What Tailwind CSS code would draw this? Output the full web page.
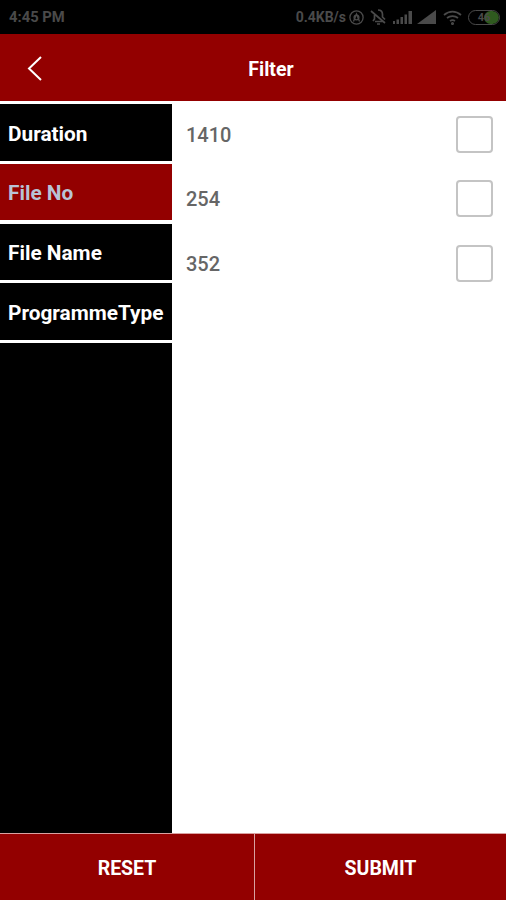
<!DOCTYPE html>
<html lang="en">
<head>
    <meta charset="UTF-8">
    <meta name="viewport" content="width=device-width, initial-scale=1.0">
    <title>Filter</title>
    <script src="https://cdn.jsdelivr.net/npm/@tailwindcss/browser@4"></script>
</head>
<body class="w-[506px] h-[900px] overflow-hidden bg-white font-['Roboto',sans-serif] flex flex-col">

    <!-- status bar -->
    <div class="h-[34px] bg-black flex items-center justify-between pl-[9px] pr-[6px] text-[#4a4a4a] font-bold">
        <span class="text-[14.8px]">4:45 PM</span>
        <div class="flex items-center">
            <span class="text-[14px]">0.4KB/s</span>
            <svg class="ml-[3px]" width="15" height="15" viewBox="0 0 15 15" fill="none" stroke="#4a4a4a" stroke-width="1.3"><circle cx="7.500" cy="7.500" r="6.600"/><path d="M4.500 11.500 7.500 4l3 7.500"/><circle cx="7.500" cy="7.500" r="2.400"/></svg>
            <svg class="ml-[6px]" width="17" height="18" viewBox="0 0 17 18" fill="none" stroke="#4a4a4a" stroke-width="1.700"><path d="M8 2c3 0 4.500 2 4.500 4.500V9l2.500 2.500M3 13l1.500-2V7M1 3l14 12M5 13.500h8M7 16h3"/></svg>
            <svg class="ml-[6px]" width="19" height="14" viewBox="0 0 19 14" fill="#4a4a4a"><path d="M0 11h2v3H0zM3.500 9.500h2.500V14H3.500zM7.500 7H10v7H7.500zM11.500 4.500H14V14h-2.500zM15.500 1H19v13h-3.500z"/></svg>
            <svg class="ml-[5px]" width="19" height="14" viewBox="0 0 19 14" fill="#4a4a4a"><path d="M0 14 19 0v14z"/></svg>
            <svg class="ml-[7px]" width="19" height="15" viewBox="0 0 19 15" fill="none" stroke="#4a4a4a" stroke-width="1.700"><path d="M1 5c5-4.500 12-4.500 17 0M4 8c3-2.500 8-2.500 11 0M7 11c1.500-1 3.500-1 5 0"/><circle cx="9.500" cy="13.500" r=".7"/></svg>
            <div class="relative ml-[6px] w-[32px] h-[15px] rounded-full border-[1.5px] border-[#4a4a4a] overflow-hidden flex items-center justify-center text-[11px] leading-none">
                <div class="absolute right-0 top-0 bottom-0 w-[15px] rounded-full bg-[#2f5a1f]"></div>
                <span class="relative">46</span>
            </div>
        </div>
    </div>

    <!-- header -->
    <div class="relative h-[67px] bg-[#930000] flex items-center justify-center pl-[36px] pt-[4px]">
        <svg class="absolute left-[26px] top-[21px]" width="18" height="27" viewBox="0 0 18 27" fill="none" stroke="#fff" stroke-width="2"><path d="M15 2 3 13.500 15 25"/></svg>
        <span class="text-white text-[19.500px] font-bold">Filter</span>
    </div>

    <div class="flex-1 flex pt-[3px] min-h-0">
        <!-- filter categories -->
        <div class="w-[172px] shrink-0 flex flex-col gap-[3px] text-[20.800px] font-bold">
            <div class="h-[57px] bg-black flex items-center pl-[8px] pt-[4px] text-white">Duration</div>
            <div class="h-[56px] mb-[1px] bg-[#930000] flex items-center pl-[8px] pt-[3px] text-[#b9c3d6]">File No</div>
            <div class="h-[56px] bg-black flex items-center pl-[8px] pt-[3px] text-white">File Name</div>
            <div class="h-[57px] bg-black flex items-center pl-[8px] pt-[4px] text-white">ProgrammeType</div>
            <div class="flex-1 bg-black"></div>
        </div>

        <!-- values -->
        <div class="flex-1 pt-[12px] pl-[14px] pr-[13px] flex flex-col gap-[27px] text-[#666666] text-[20px] font-medium">
            <div class="h-[37px] flex items-center justify-between">
                <span>1410</span>
                <div class="w-[37px] h-[37px] rounded-[4px] border-2 border-[#c4c4c4]"></div>
            </div>
            <div class="h-[37px] flex items-center justify-between">
                <span class="pt-[1px]">254</span>
                <div class="w-[37px] h-[37px] rounded-[4px] border-2 border-[#c4c4c4]"></div>
            </div>
            <div class="h-[37px] mt-[1px] flex items-center justify-between">
                <span class="pt-[1px]">352</span>
                <div class="w-[37px] h-[37px] rounded-[4px] border-2 border-[#c4c4c4]"></div>
            </div>
        </div>
    </div>

    <!-- actions -->
    <div class="h-[67px] bg-[#930000] flex text-white text-[19.500px] font-bold border-t border-[#d9a0a0]">
        <div class="w-[255px] flex items-center justify-center pt-[3px] border-r border-[#d9a0a0]">RESET</div>
        <div class="flex-1 flex items-center justify-center pt-[3px]">SUBMIT</div>
    </div>
</body>
</html>
